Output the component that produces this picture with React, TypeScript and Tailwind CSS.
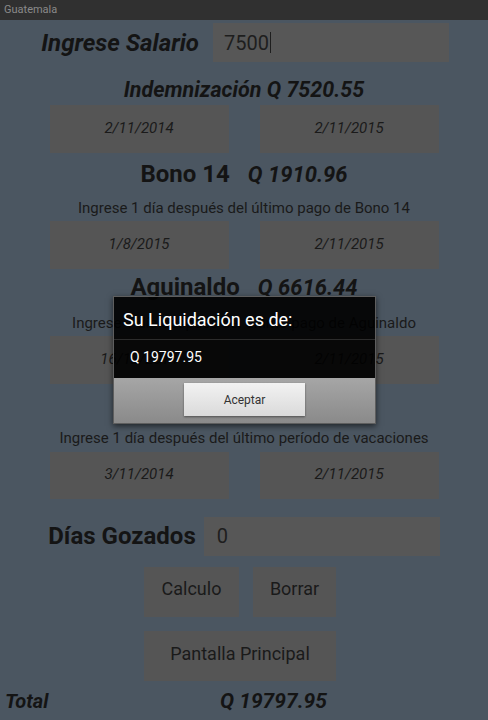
import React from "react";

function DateRow({ a, b, cls }: { a: string; b: string; cls: string }) {
  return (
    <div className={`flex justify-center gap-[31px] ${cls}`}>
      <div className="w-[179px] h-full bg-[#555555] flex items-center justify-center pb-[3px] text-[15px] italic text-[#1a1a1a] leading-[18px]">
        {a}
      </div>
      <div className="w-[179px] h-full bg-[#555555] flex items-center justify-center pb-[3px] text-[15px] italic text-[#1a1a1a] leading-[18px]">
        {b}
      </div>
    </div>
  );
}

function Heading({ label, amount, cls }: { label: string; amount: string; cls: string }) {
  return (
    <div className={`flex justify-center items-baseline gap-[18px] h-[28px] leading-[28px] text-[#141414] ${cls}`}>
      <span className="text-[24px] font-bold">{label}</span>
      <span className="text-[22px] font-bold italic">{amount}</span>
    </div>
  );
}

function Sub({ text, cls }: { text: string; cls: string }) {
  return (
    <div className={`h-[18px] leading-[18px] text-[15px] text-center text-[#1a1a1a] whitespace-nowrap ${cls}`}>{text}</div>
  );
}

export default function App() {
  return (
    <div className="relative w-[488px] h-[720px] overflow-hidden bg-[#4b5661] font-['Roboto',sans-serif]">
      {/* title bar */}
      <div className="h-[20px] bg-[#303030] flex items-center pl-[4px] pt-[1px] text-[11px] text-[#8a8a8a]">Guatemala</div>

      {/* salario */}
      <div className="flex items-center mt-[3px] h-[39px]">
        <div className="w-[213px] flex justify-end pr-[14px] text-[24px] leading-[28px] font-bold italic text-[#141414] whitespace-nowrap">
          Ingrese Salario
        </div>
        <div className="w-[236px] h-full bg-[#575757] flex items-center pl-[11px] text-[20px] text-[#1e1e1e]">
          7500
          <span className="inline-block w-[1px] h-[21px] bg-[#1e1e1e] ml-[1px]" />
        </div>
      </div>

      <div className="mt-[16px] h-[24px] leading-[24px] text-center text-[21.5px] font-bold italic text-[#141414]">
        Indemnización Q 7520.55
      </div>

      <DateRow a="2/11/2014" b="2/11/2015" cls="mt-[3px] h-[48px]" />

      <Heading label="Bono 14" amount="Q 1910.96" cls="mt-[7px]" />
      <Sub text="Ingrese 1 día después del último pago de Bono 14" cls="mt-[11px]" />
      <DateRow a="1/8/2015" b="2/11/2015" cls="mt-[4px] h-[48px]" />

      <Heading label="Aguinaldo" amount="Q 6616.44" cls="mt-[4px]" />
      <Sub text="Ingrese 1 día después del último pago de Aguinaldo" cls="mt-[13px]" />
      <DateRow a="16/12/2014" b="2/11/2015" cls="mt-[4px] h-[48px]" />

      <Heading label="Vacaciones" amount="Q 3750.00" cls="mt-[8px]" />
      <Sub text="Ingrese 1 día después del último período de vacaciones" cls="mt-[9px]" />
      <DateRow a="3/11/2014" b="2/11/2015" cls="mt-[5px] h-[47px]" />

      {/* dias gozados */}
      <div className="flex justify-center items-center gap-[8px] mt-[18px] h-[39px]">
        <span className="text-[24px] leading-[28px] font-bold text-[#141414] pb-[2px]">Días Gozados</span>
        <div className="w-[236px] h-full bg-[#575757] flex items-center pl-[13px] pb-[2px] text-[20px] text-[#1e1e1e]">0</div>
      </div>

      {/* buttons */}
      <div className="flex gap-[14px] pl-[144px] mt-[11px] h-[50px]">
        <div className="w-[95px] h-full bg-[#555555] flex items-center justify-center pb-[7px] text-[18px] text-[#1a1a1a]">Calculo</div>
        <div className="w-[83px] h-full bg-[#555555] flex items-center justify-center pb-[7px] text-[18px] text-[#1a1a1a]">Borrar</div>
      </div>
      <div className="flex pl-[144px] mt-[14px] h-[50px]">
        <div className="w-[192px] h-full bg-[#555555] flex items-center justify-center pb-[5px] text-[18px] text-[#1a1a1a]">
          Pantalla Principal
        </div>
      </div>

      {/* total */}
      <div className="flex mt-[8px] pl-[5px] h-[24px] leading-[24px] text-[20px] font-bold italic text-[#141414]">
        <span className="w-[215px]">Total</span>
        <span className="text-[21px]">Q 19797.95</span>
      </div>

      {/* dialog */}
      <div className="absolute left-[113px] top-[296px] w-[263px] h-[128px] border border-[#5e5e5e] shadow-[0_2px_6px_rgba(0,0,0,0.6)] flex flex-col">
        <div className="h-[42px] bg-black/[0.9] pt-[12px] pl-[9px] text-[18px] leading-[22px] text-white">
          Su Liquidación es de:
        </div>
        <div className="h-[1px] bg-[#2c2c2c]" />
        <div className="h-[38px] bg-black/[0.9] pt-[8px] pl-[16px] text-[14px] leading-[18px] text-white">Q 19797.95</div>
        <div className="flex-1 bg-gradient-to-b from-[#a6a6a6] to-[#8a8a8a] flex justify-center pt-[5px]">
          <div className="w-[121px] h-[33px] bg-gradient-to-b from-[#f2f2f2] to-[#dadada] shadow-[0_1px_2px_rgba(0,0,0,0.45)] flex items-center justify-center text-[12px] text-[#333]">
            Aceptar
          </div>
        </div>
      </div>
    </div>
  );
}
